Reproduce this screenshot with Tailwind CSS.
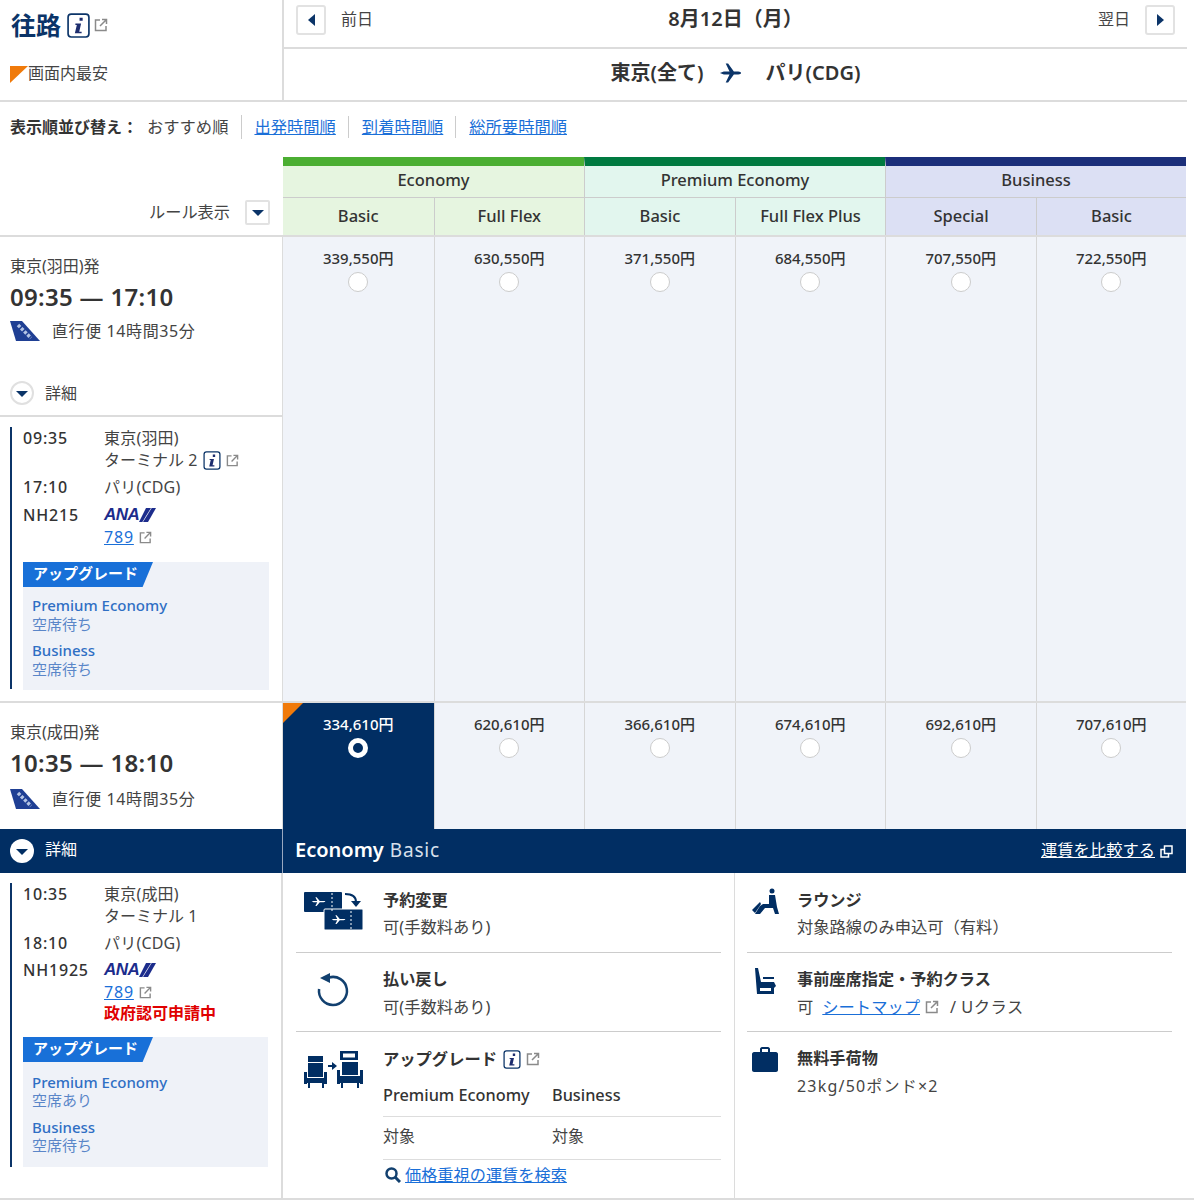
<!DOCTYPE html>
<html lang="ja">
<head>
<meta charset="UTF-8">
<title>往路</title>
<script src="https://cdn.jsdelivr.net/npm/@tailwindcss/browser@4"></script>
</head>
<body class="bg-white font-['Noto_Sans','Noto_Sans_CJK_JP',sans-serif] text-[16px] text-[#444]">

<svg class="hidden">
  <symbol id="ext" viewBox="0 0 14 14"><path d="M6 2H1.500v10.500H12V8" fill="none" stroke="#8a8a8a" stroke-width="1.500"/><path d="M6 8l6-6M8 1.500h4.500V6" fill="none" stroke="#8a8a8a" stroke-width="1.500"/></symbol>
  <symbol id="info" viewBox="0 0 22 24"><rect x="1" y="1" width="20" height="22" rx="3" fill="#fff" stroke="#0b3468" stroke-width="1.600"/><path d="M12 4.500h3v3h-3zM8 10h5.500l-1.800 8H14v1.500H7.500l1.900-8H8z" fill="#1d2d6e"/></symbol>
  <symbol id="tail" viewBox="0 0 30 20"><path d="M0 0h12l18 20H6z" fill="#1f3f94"/><path d="M8 4l13 13" stroke="#b4c4e4" stroke-width="3.500" stroke-dasharray="3 1.500"/></symbol>
  <symbol id="plane" viewBox="0 0 24 16"><path d="M1 8l3-1h6L7 1h2l5 6h6c2 0 3 .5 3 1s-1 1-3 1h-6l-5 6H7l3-6H4z" fill="#fff"/></symbol>
</svg>

<main class="w-[1194px] h-[1200px] overflow-hidden">

  <header class="flex w-[1187px] h-[102px] border-b-2 border-[#dcdcdc]">
    <div class="w-[284px] shrink-0 border-r-2 border-[#dcdcdc] pl-[10px] pt-[8px]">
      <div class="flex items-center h-[34px]">
        <span class="text-[25px] font-bold text-[#0b3468] leading-[34px] ml-[1px]">往路</span>
        <svg class="w-[23px] h-[25px] ml-[6px]"><use href="#info"/></svg>
        <svg class="w-[14px] h-[14px] ml-[4px]"><use href="#ext"/></svg>
      </div>
      <div class="flex items-center mt-[19px] h-[24px]">
        <span class="w-0 h-0 mt-[2px] border-t-[17px] border-t-[#f07a0a] border-r-[18px] border-r-transparent"></span>
        <span class="text-[#444]">画面内最安</span>
      </div>
    </div>
    <div class="flex-1">
      <div class="h-[49px] border-b-2 border-[#dcdcdc] flex items-start pt-[5px] px-[12px]">
        <button class="w-[30px] h-[30px] bg-white border-2 border-[#e2e2e2] rounded-[3px] flex items-center justify-center">
          <span class="border-y-[6px] border-y-transparent border-r-[7px] border-r-[#0b3468]"></span>
        </button>
        <span class="ml-[15px] mt-[3px] leading-[22px]">前日</span>
        <span class="flex-1 text-center text-[20px] font-semibold text-[#333] leading-[28px]">8月12日（月）</span>
        <span class="mr-[15px] mt-[3px] leading-[22px]">翌日</span>
        <button class="w-[30px] h-[30px] bg-white border-2 border-[#e2e2e2] rounded-[3px] flex items-center justify-center">
          <span class="border-y-[6px] border-y-transparent border-l-[7px] border-l-[#0b3468]"></span>
        </button>
      </div>
      <div class="h-[51px] flex items-center justify-center text-[20px] font-semibold text-[#333] pb-[3px]">
        <span>東京(全て)</span>
        <svg class="w-[23px] h-[24px] ml-[15px] mr-[24px]" viewBox="0 0 24 24"><path d="M1 12l4-1.500h6L7 2h2.500l6 8.500H20c2 0 3 .8 3 1.500s-1 1.500-3 1.500h-4.500l-6 8.500H7l4-8.500H5z" fill="#0b3468"/></svg>
        <span>パリ(CDG)</span>
      </div>
    </div>
  </header>

  <nav class="h-[55px] flex items-center pl-[10px] pb-[5px] text-[16.300px]">
    <b class="font-bold text-[16px] text-[#333]">表示順並び替え：</b>
    <span class="ml-[9px] pr-[13px] border-r border-[#ccc]">おすすめ順</span>
    <a href="#" class="ml-[12px] text-[#1a6fd8] underline">出発時間順</a>
    <span class="h-[22px] ml-[12px] border-r border-[#ccc]"></span>
    <a href="#" class="ml-[13px] text-[#1a6fd8] underline">到着時間順</a>
    <span class="h-[22px] ml-[12px] border-r border-[#ccc]"></span>
    <a href="#" class="ml-[13px] text-[#1a6fd8] underline">総所要時間順</a>
  </nav>

  <section class="flex w-[1186px] h-[80px] border-b-2 border-[#dcdcdc]">
    <div class="w-[283px] shrink-0 flex items-end justify-end pr-[13px] pb-[10px]">
      <span class="text-[16.200px] mr-[15px] mb-[1px]">ルール表示</span>
      <button class="w-[25px] h-[25px] bg-white border-2 border-[#e2e2e2] rounded-[2px] flex items-center justify-center">
        <span class="border-x-[6px] border-x-transparent border-t-[6px] border-t-[#0b3468]"></span>
      </button>
    </div>
    <div class="flex-1 grid grid-cols-3 text-[16.500px] font-medium text-[#333] text-center">
      <div class="bg-[#e6f5e0] border-t-[9px] border-[#4bae32] flex flex-col">
        <div class="h-[32px] leading-[27px] border-b border-[#ccc]">Economy</div>
        <div class="flex-1 grid grid-cols-2 leading-[36px]"><div>Basic</div><div class="border-l border-[#ccc]">Full Flex</div></div>
      </div>
      <div class="bg-[#e2f6ee] border-t-[9px] border-l border-l-[#ccc] border-[#007a40] flex flex-col">
        <div class="h-[32px] leading-[27px] border-b border-[#ccc]">Premium Economy</div>
        <div class="flex-1 grid grid-cols-2 leading-[36px]"><div>Basic</div><div class="border-l border-[#ccc]">Full Flex Plus</div></div>
      </div>
      <div class="bg-[#dce0f4] border-t-[9px] border-l border-l-[#ccc] border-[#1b2f7a] flex flex-col">
        <div class="h-[32px] leading-[27px] border-b border-[#ccc]">Business</div>
        <div class="flex-1 grid grid-cols-2 leading-[36px]"><div>Special</div><div class="border-l border-[#ccc]">Basic</div></div>
      </div>
    </div>
  </section>

  <section class="flex w-[1186px] h-[466px] border-b-2 border-[#dcdcdc]">
    <div class="w-[283px] shrink-0 border-r border-[#dcdcdc]">
      <div class="h-[180px] border-b-2 border-[#dcdcdc] pl-[10px] pt-[18px] relative">
        <div class="leading-[22px]">東京(羽田)発</div>
        <div class="text-[24px] font-semibold text-[#333] leading-[30px] mt-[5px] tracking-[0.3px]">09:35 — 17:10</div>
        <div class="flex items-center mt-[7px] h-[24px]">
          <svg class="w-[30px] h-[20px]"><use href="#tail"/></svg>
          <span class="ml-[12px] tracking-[0.6px]">直行便 14時間35分</span>
        </div>
        <div class="absolute left-[10px] top-[144px] flex items-center">
          <span class="w-[24px] h-[24px] rounded-full bg-white border-2 border-[#e0e0e0] flex items-center justify-center"><span class="border-x-[6px] border-x-transparent border-t-[6px] border-t-[#0b3468] mt-[2px]"></span></span>
          <span class="ml-[11px]">詳細</span>
        </div>
      </div>
      <div class="ml-[10px] mt-[11px] mr-[13px] border-l-2 border-[#0b3468] pl-[11px] h-[262px]">
        <div class="grid grid-cols-[81px_1fr] leading-[22px] -mt-[1px]">
          <b class="font-medium text-[#333] tracking-[0.8px]">09:35</b>
          <div class="tracking-[0.2px]">東京(羽田)</div>
          <div></div>
          <div class="flex items-center h-[22px]">ターミナル 2<svg class="w-[18px] h-[19px] ml-[6px]"><use href="#info"/></svg><svg class="w-[13px] h-[13px] ml-[5px]"><use href="#ext"/></svg></div>
          <b class="font-medium text-[#333] tracking-[0.8px] mt-[5px]">17:10</b>
          <div class="mt-[5px] tracking-[0.2px]">パリ(CDG)</div>
          <b class="font-medium text-[#333] tracking-[0.8px] mt-[6px]">NH215</b>
          <div class="flex items-center mt-[6px] h-[21px]">
            <i class="font-black italic text-[17px] text-[#1c2c8c] font-['Liberation_Sans'] tracking-[-0.5px]">ANA</i>
            <svg class="w-[17px] h-[14px]" viewBox="0 0 17 14"><path d="M7 0h10L9 14H0z" fill="#1c2c8c"/><path d="M12 0h.7L4 14h-.7z" fill="#fff"/></svg>
          </div>
          <div></div>
          <div class="flex items-center"><a href="#" class="text-[#1a6fd8] underline tracking-[0.8px]">789</a><svg class="w-[13px] h-[13px] ml-[5px]"><use href="#ext"/></svg></div>
        </div>
        <div class="bg-[#eff2f8] mt-[14px] h-[128px]">
          <div class="h-[25px] w-[130px] bg-[#1870d8] [clip-path:polygon(0_0,100%_0,92%_100%,0_100%)] text-white font-bold text-[15px] leading-[23px] pl-[10px]">アップグレード</div>
          <div class="pl-[9px] pt-[9px] text-[15px] text-[#2f6fc4] leading-[19px]">
            <div class="font-medium">Premium Economy</div>
            <div class="text-[#5a86c8]">空席待ち</div>
            <div class="font-medium mt-[7px]">Business</div>
            <div class="text-[#5a86c8]">空席待ち</div>
          </div>
        </div>
      </div>
    </div>
    <div class="flex-1 grid grid-cols-6 bg-[#f0f3f9] text-center text-[15px] font-medium text-[#333]">
      <div class="pt-[9px] leading-[24px]">339,550円<span class="block mx-auto mt-[2px] w-[20px] h-[20px] rounded-full bg-white border border-[#ccc]"></span></div>
      <div class="border-l border-[#d6d6d6] pt-[9px] leading-[24px]">630,550円<span class="block mx-auto mt-[2px] w-[20px] h-[20px] rounded-full bg-white border border-[#ccc]"></span></div>
      <div class="border-l border-[#d6d6d6] pt-[9px] leading-[24px]">371,550円<span class="block mx-auto mt-[2px] w-[20px] h-[20px] rounded-full bg-white border border-[#ccc]"></span></div>
      <div class="border-l border-[#d6d6d6] pt-[9px] leading-[24px]">684,550円<span class="block mx-auto mt-[2px] w-[20px] h-[20px] rounded-full bg-white border border-[#ccc]"></span></div>
      <div class="border-l border-[#d6d6d6] pt-[9px] leading-[24px]">707,550円<span class="block mx-auto mt-[2px] w-[20px] h-[20px] rounded-full bg-white border border-[#ccc]"></span></div>
      <div class="border-l border-[#d6d6d6] pt-[9px] leading-[24px]">722,550円<span class="block mx-auto mt-[2px] w-[20px] h-[20px] rounded-full bg-white border border-[#ccc]"></span></div>
    </div>
  </section>

  <section class="flex w-[1186px] h-[126px]">
    <div class="w-[283px] shrink-0 border-r border-[#dcdcdc] pl-[10px] pt-[18px]">
      <div class="leading-[22px]">東京(成田)発</div>
      <div class="text-[24px] font-semibold text-[#333] leading-[30px] mt-[5px] tracking-[0.3px]">10:35 — 18:10</div>
      <div class="flex items-center mt-[9px] h-[24px]">
        <svg class="w-[30px] h-[20px]"><use href="#tail"/></svg>
        <span class="ml-[12px] tracking-[0.6px]">直行便 14時間35分</span>
      </div>
    </div>
    <div class="flex-1 grid grid-cols-6 bg-[#f0f3f9] text-center text-[15px] font-medium text-[#333]">
      <div class="bg-[#012e63] text-white pt-[9px] leading-[24px] relative">
        <span class="absolute left-0 top-0 border-t-[20px] border-t-[#f07a0a] border-r-[20px] border-r-transparent"></span>
        334,610円<span class="block mx-auto mt-[2px] w-[20px] h-[20px] rounded-full bg-[#012e63] border-[5px] border-white"></span>
      </div>
      <div class="border-l border-[#d6d6d6] pt-[9px] leading-[24px]">620,610円<span class="block mx-auto mt-[2px] w-[20px] h-[20px] rounded-full bg-white border border-[#ccc]"></span></div>
      <div class="border-l border-[#d6d6d6] pt-[9px] leading-[24px]">366,610円<span class="block mx-auto mt-[2px] w-[20px] h-[20px] rounded-full bg-white border border-[#ccc]"></span></div>
      <div class="border-l border-[#d6d6d6] pt-[9px] leading-[24px]">674,610円<span class="block mx-auto mt-[2px] w-[20px] h-[20px] rounded-full bg-white border border-[#ccc]"></span></div>
      <div class="border-l border-[#d6d6d6] pt-[9px] leading-[24px]">692,610円<span class="block mx-auto mt-[2px] w-[20px] h-[20px] rounded-full bg-white border border-[#ccc]"></span></div>
      <div class="border-l border-[#d6d6d6] pt-[9px] leading-[24px]">707,610円<span class="block mx-auto mt-[2px] w-[20px] h-[20px] rounded-full bg-white border border-[#ccc]"></span></div>
    </div>
  </section>

  <section class="flex w-[1186px] h-[44px] bg-[#012e63] text-white items-center">
    <div class="w-[283px] shrink-0 pl-[10px] flex items-center border-r border-[#9aa8c0] h-full">
      <span class="w-[24px] h-[24px] rounded-full bg-white flex items-center justify-center"><span class="border-x-[6px] border-x-transparent border-t-[6px] border-t-[#012e63] mt-[2px]"></span></span>
      <span class="ml-[11px] -mt-[5px]">詳細</span>
    </div>
    <div class="flex-1 flex items-center pl-[12px] pr-[13px] -mt-[2px]">
      <b class="text-[20px] font-semibold">Economy</b>
      <span class="text-[19px] ml-[6px] tracking-[0.8px] text-[#d8e0ec]">Basic</span>
      <a href="#" class="ml-auto text-[16.300px] underline">運賃を比較する</a>
      <svg class="w-[13px] h-[13px] ml-[5px] mt-[2px]" viewBox="0 0 13 13"><path d="M4.500 1h7.500v7.500H4.500z M8.500 8.500V12H1V4.500h3.500" fill="none" stroke="#fff" stroke-width="1.500"/></svg>
    </div>
  </section>

  <section class="flex w-[1194px] h-[327px] border-b-2 border-[#dcdcdc]">
    <div class="w-[283px] shrink-0 border-r-2 border-[#dcdcdc]">
      <div class="ml-[10px] mt-[10px] mr-[13px] border-l-2 border-[#0b3468] pl-[11px] h-[284px]">
        <div class="grid grid-cols-[81px_1fr] leading-[22px]">
          <b class="font-medium text-[#333] tracking-[0.8px]">10:35</b>
          <div class="tracking-[0.2px]">東京(成田)</div>
          <div></div>
          <div class="h-[22px]">ターミナル 1</div>
          <b class="font-medium text-[#333] tracking-[0.8px] mt-[5px]">18:10</b>
          <div class="mt-[5px] tracking-[0.2px]">パリ(CDG)</div>
          <b class="font-medium text-[#333] tracking-[0.8px] mt-[5px]">NH1925</b>
          <div class="flex items-center mt-[5px] h-[22px]">
            <i class="font-black italic text-[17px] text-[#1c2c8c] font-['Liberation_Sans'] tracking-[-0.5px]">ANA</i>
            <svg class="w-[17px] h-[14px]" viewBox="0 0 17 14"><path d="M7 0h10L9 14H0z" fill="#1c2c8c"/><path d="M12 0h.7L4 14h-.7z" fill="#fff"/></svg>
          </div>
          <div></div>
          <div class="flex items-center"><a href="#" class="text-[#1a6fd8] underline tracking-[0.8px]">789</a><svg class="w-[13px] h-[13px] ml-[5px]"><use href="#ext"/></svg></div>
          <div></div>
          <b class="font-bold text-[#e00000] text-[16px] leading-[20px]">政府認可申請中</b>
        </div>
        <div class="bg-[#eff2f8] mt-[14px] h-[130px]">
          <div class="h-[25px] w-[130px] bg-[#1870d8] [clip-path:polygon(0_0,100%_0,92%_100%,0_100%)] text-white font-bold text-[15px] leading-[23px] pl-[10px]">アップグレード</div>
          <div class="pl-[9px] pt-[11px] text-[15px] text-[#2f6fc4] leading-[18px]">
            <div class="font-medium">Premium Economy</div>
            <div class="text-[#5a86c8]">空席あり</div>
            <div class="font-medium mt-[9px]">Business</div>
            <div class="text-[#5a86c8]">空席待ち</div>
          </div>
        </div>
      </div>
    </div>

    <div class="w-[452px] shrink-0 border-r border-[#dcdcdc] pl-[13px] pr-[13px]">
      <div class="flex h-[80px] border-b border-[#ccc] pt-[15px]">
        <svg class="w-[60px] h-[38px] ml-[8px] mt-[4px]" viewBox="0 0 60 38">
          <rect x="0" y="0" width="38" height="20" rx="1" fill="#012e63"/><rect x="20" y="17" width="39" height="21" rx="1" fill="#012e63" stroke="#fff" stroke-width="1"/>
          <use href="#plane" x="7" y="3" width="15" height="13"/><use href="#plane" x="27" y="21" width="15" height="13"/>
          <path d="M28 1v18M47 19v18" stroke="#fff" stroke-dasharray="2 2"/>
          <path d="M41 2c7 0 11 2 11 8" fill="none" stroke="#012e63" stroke-width="2"/><path d="M47 9h10l-5 6z" fill="#012e63"/>
        </svg>
        <div class="ml-[19px]">
          <b class="block font-bold text-[16.200px] text-[#333] leading-[24px]">予約変更</b>
          <div class="leading-[24px] mt-[3px] text-[16.300px]">可(手数料あり)</div>
        </div>
      </div>
      <div class="flex h-[79px] border-b border-[#ccc] pt-[14px]">
        <svg class="w-[34px] h-[36px] ml-[20px] mt-[5px]" viewBox="0 0 34 36"><path d="M13 5.500A14 14 0 1 1 3.100 17" fill="none" stroke="#12406f" stroke-width="2.500"/><path d="M4 6l10-5v10z" fill="#12406f"/></svg>
        <div class="ml-[33px]">
          <b class="block font-bold text-[16.200px] text-[#333] leading-[24px]">払い戻し</b>
          <div class="leading-[24px] mt-[4px] text-[16.300px]">可(手数料あり)</div>
        </div>
      </div>
      <div class="flex pt-[15px]">
        <svg class="w-[60px] h-[40px] ml-[8px] mt-[3px]" viewBox="0 0 60 40">
          <path d="M4 6h15v6H4zM4 13h15v14H4zM0 22h3v12H0zM20 22h3v12h-3zM3 28h18v5h-1v5h-2v-5H6v5H4v-5H3z" fill="#012e63"/>
          <path d="M24 15h4v-3l5 4-5 4v-3h-4z" fill="#012e63"/>
          <path d="M36 1h18v9H36z" fill="#012e63"/><path d="M39 3.500h12v4H39z" fill="#fff"/>
          <path d="M38 12h16v13H38zM33 20h3v14h-3zM56 20h3v14h-3zM36 26h20v7h-1v5h-2v-5H39v5h-2v-5h-1z" fill="#012e63"/>
        </svg>
        <div class="ml-[19px] w-[338px]">
          <div class="flex items-center h-[24px]"><b class="font-bold text-[16.300px] text-[#333]">アップグレード</b><svg class="w-[18px] h-[19px] ml-[6px]"><use href="#info"/></svg><svg class="w-[14px] h-[14px] ml-[5px]"><use href="#ext"/></svg></div>
          <div class="grid grid-cols-[169px_1fr] font-medium text-[16.300px] text-[#333] h-[45px] leading-[46px] border-b border-[#ddd] mt-[1px]"><span>Premium Economy</span><span>Business</span></div>
          <div class="grid grid-cols-[169px_1fr] h-[43px] leading-[38px] border-b border-[#ddd]"><span>対象</span><span>対象</span></div>
          <div class="flex items-center h-[30px]">
            <svg class="w-[16px] h-[16px] ml-[2px]" viewBox="0 0 16 16"><circle cx="6.500" cy="6.500" r="5" fill="none" stroke="#12406f" stroke-width="2.500"/><path d="M10 10l5 5" stroke="#12406f" stroke-width="3"/></svg>
            <a href="#" class="ml-[4px] text-[#1a6fd8] underline text-[16.200px]">価格重視の運賃を検索</a>
          </div>
        </div>
      </div>
    </div>

    <div class="w-[437px] shrink-0 pl-[12px]">
      <div class="flex h-[80px] border-b border-[#ccc] pt-[15px]">
        <svg class="w-[28px] h-[28px] ml-[5px]" viewBox="0 0 28 28"><circle cx="20" cy="3" r="2.500" fill="#012e63"/><path d="M17 7h6l2 12 2 7h-4l-2-6h-8l-5 6H3l5-8 3-2h6zM0 22l8-8 1 2-6 9z" fill="#012e63"/></svg>
        <div class="ml-[17px]">
          <b class="block font-bold text-[16.200px] text-[#333] leading-[24px]">ラウンジ</b>
          <div class="leading-[24px] mt-[3px] text-[16.300px]">対象路線のみ申込可（有料）</div>
        </div>
      </div>
      <div class="flex h-[79px] border-b border-[#ccc] pt-[14px]">
        <svg class="w-[24px] h-[26px] ml-[6px] mt-[1px]" viewBox="0 0 24 26"><path d="M2 0h3l3 14h13l2 4-2 2v6H4zM10 9h11v2H10zM7 20v3h11v-3z" fill="#012e63" fill-rule="evenodd"/></svg>
        <div class="ml-[20px]">
          <b class="block font-bold text-[16.200px] text-[#333] leading-[24px]">事前座席指定・予約クラス</b>
          <div class="flex items-center mt-[4px] h-[24px] text-[16.300px]">可<a href="#" class="ml-[9px] text-[#1a6fd8] underline">シートマップ</a><svg class="w-[14px] h-[14px] ml-[5px]"><use href="#ext"/></svg><span class="ml-[11px] tracking-[0.5px]">/ Uクラス</span></div>
        </div>
      </div>
      <div class="flex pt-[14px]">
        <svg class="w-[26px] h-[26px] ml-[5px] mt-[1px]" viewBox="0 0 26 26"><path d="M8 5V2c0-1 1-2 2-2h6c1 0 2 1 2 2v3h6c1 0 2 1 2 2v16c0 1-1 2-2 2H2c-1 0-2-1-2-2V7c0-1 1-2 2-2zm2 0h6V2h-6z" fill="#012e63"/></svg>
        <div class="ml-[19px]">
          <b class="block font-bold text-[16.200px] text-[#333] leading-[24px]">無料手荷物</b>
          <div class="leading-[24px] mt-[4px] tracking-[1.200px]">23kg/50ポンド×2</div>
        </div>
      </div>
    </div>
  </section>

</main>
</body>
</html>
